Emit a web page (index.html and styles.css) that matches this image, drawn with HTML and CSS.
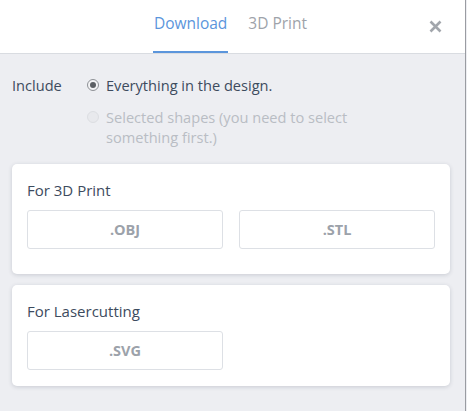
FILE: index.html
```html
<!DOCTYPE html>
<html lang="en">
<head>
<meta charset="utf-8">
<title>Export</title>
<link rel="stylesheet" href="styles.css">
</head>
<body>
<div class="dialog">
  <header class="header">
    <nav class="tabs">
      <span class="tab tab-active">Download</span>
      <span class="tab">3D Print</span>
    </nav>
    <button class="close" aria-label="Close">
      <svg width="13" height="13" viewBox="0 0 13 13"><path d="M1.5 1.5 L11.5 11.5 M11.5 1.5 L1.5 11.5" stroke="#a2a6ac" stroke-width="2.6" stroke-linecap="butt"/></svg>
    </button>
  </header>
  <main class="content">
    <div class="include">
      <div class="include-label">Include</div>
      <div class="options">
        <label class="option">
          <span class="radio radio-checked"></span>
          <span>Everything in the design.</span>
        </label>
        <label class="option option-disabled">
          <span class="radio"></span>
          <span>Selected shapes (you need to select<br>something first.)</span>
        </label>
      </div>
    </div>
    <section class="card card-first">
      <h3 class="card-title">For 3D Print</h3>
      <div class="buttons">
        <button class="fmt">.OBJ</button>
        <button class="fmt">.STL</button>
      </div>
    </section>
    <section class="card">
      <h3 class="card-title">For Lasercutting</h3>
      <div class="buttons">
        <button class="fmt">.SVG</button>
      </div>
    </section>
  </main>
</div>
</body>
</html>
```

FILE: styles.css
```css
html, body {
  margin: 0;
  padding: 0;
}
body {
  width: 467px;
  height: 411px;
  background: #edeef2;
  font-family: "Open Sans", "Noto Sans", sans-serif;
  color: #3d4b5e;
  overflow: hidden;
}
.dialog {
  width: 465px;
  height: 411px;
  border-right: 1px solid #9a9ca2;
  background: #edeef2;
  display: flex;
  flex-direction: column;
}
.header {
  height: 53px;
  background: #fff;
  border-bottom: 1px solid #d9dce1;
  display: flex;
  justify-content: center;
  position: relative;
}
.tabs {
  display: flex;
  gap: 19px;
  padding-right: 4px;
}
.tab {
  display: block;
  padding: 11px 1px 0;
  height: 40px;
  font-size: 15.5px;
  line-height: 24px;
  color: #9ea3aa;
  border-bottom: 2px solid transparent;
}
.tab-active {
  color: #5b95dc;
  border-bottom-color: #5b95dc;
}
.close {
  position: absolute;
  right: 22px;
  top: 19px;
  width: 15px;
  height: 15px;
  padding: 1px;
  border: 0;
  background: none;
  display: flex;
}
.content {
  padding: 0 15px 0 12px;
  display: flex;
  flex-direction: column;
  gap: 11px;
}
.include {
  display: flex;
  padding-top: 21px;
  padding-bottom: 6px;
  font-size: 14.6px;
  line-height: 20px;
}
.include-label {
  width: 75px;
}
.options {
  display: flex;
  flex-direction: column;
  gap: 12px;
}
.option {
  display: flex;
  gap: 7px;
  align-items: flex-start;
}
.option-disabled {
  color: #b9bdc4;
}
.radio {
  box-sizing: border-box;
  width: 12px;
  height: 12px;
  margin-top: 4px;
  border-radius: 50%;
  border: 1px solid #c9ccd1;
  background: #e6e7eb;
  display: flex;
  align-items: center;
  justify-content: center;
  flex: none;
}
.radio-checked {
  border-color: #8e9196;
  background: #f3f3f5;
}
.radio-checked::after {
  content: "";
  width: 6px;
  height: 6px;
  border-radius: 50%;
  background: #5c5f64;
}
.option-disabled .radio {
  border-color: #dcdee2;
  background: #e8e9ed;
}
.card {
  background: #fff;
  border-radius: 5px;
  box-shadow: 0 1px 4px rgba(40, 50, 70, 0.18);
  padding: 16px 15px 16px;
}
.card-first {
  padding-bottom: 25px;
}
.card-title {
  margin: 0 0 10px;
  font-size: 15px;
  font-weight: normal;
  line-height: 20px;
}
.buttons {
  display: grid;
  grid-template-columns: 1fr 1fr;
  gap: 16px;
}
.fmt {
  height: 39px;
  border: 1px solid #dde0e5;
  border-radius: 3px;
  background: #fff;
  font-family: "Open Sans", "Noto Sans", sans-serif;
  font-weight: bold;
  font-size: 14.5px;
  color: #9ca2aa;
  padding: 0;
}
```
